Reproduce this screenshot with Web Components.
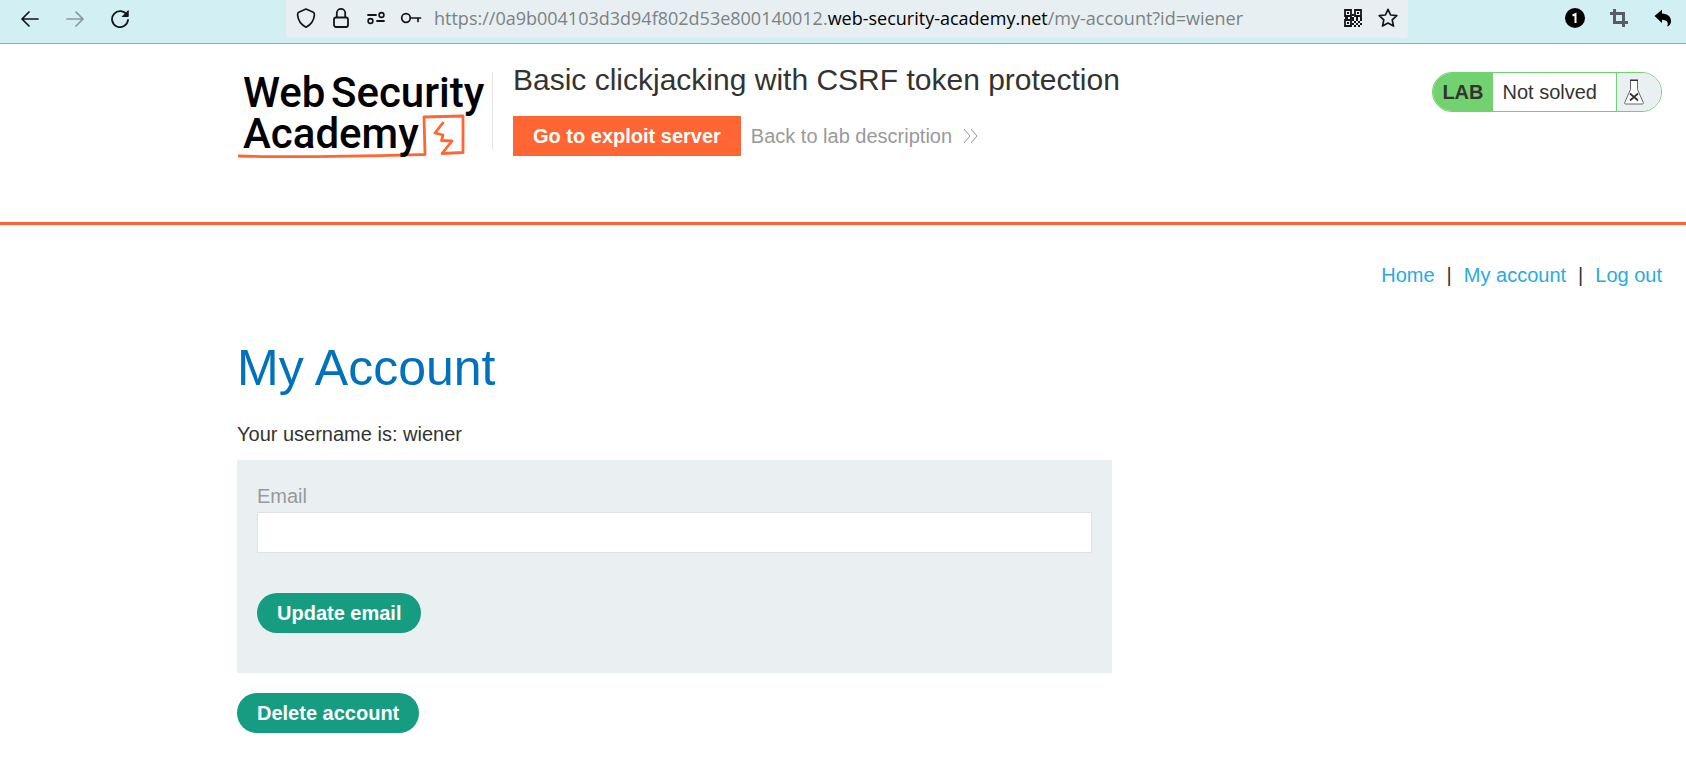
<!DOCTYPE html>
<html lang="en">
<head>
<meta charset="utf-8">
<title>Basic clickjacking with CSRF token protection</title>
<style>
body { margin: 0; background: #fff; color: #333332; font: 20px/24px "Liberation Sans", Arial, sans-serif; }
</style>
</head>
<body>
<browser-toolbar>
  <span slot="scheme">https://0a9b004103d3d94f802d53e800140012.</span><span slot="domain">web-security-academy.net</span><span slot="path">/my-account?id=wiener</span>
</browser-toolbar>
<lab-header>
  <academy-logo slot="logo"></academy-logo>
  <span slot="title">Basic clickjacking with CSRF token protection</span>
  <lab-status slot="status">Not solved</lab-status>
</lab-header>
<account-page></account-page>

<script>
const define = (name, markup) => {
  const template = document.createElement('template');
  template.innerHTML = markup;
  customElements.define(name, class extends HTMLElement {
    constructor() {
      super();
      this.attachShadow({ mode: 'open' }).append(template.content.cloneNode(true));
    }
  });
};

define('browser-toolbar', `
<style>
:host { display: flex; height: 43px; background: #d2eff3; border-bottom: 1px solid #94a9ad; font: 18px/24px "Open Sans", "Noto Sans", sans-serif; color: #7b8284; }
.nav { display: flex; width: 279px; padding-left: 7px; height: 37px; }
.bar { display: flex; flex: 1; min-width: 0; align-items: center; height: 38px; padding: 0 3px 2px 2px; background: #e8eff2; border-radius: 0 0 4px 4px; box-sizing: border-box; }
.url { flex: 1; min-width: 0; padding-left: 6px; white-space: nowrap; overflow: hidden; display: flex; }
.tools { display: flex; width: 278px; height: 36px; justify-content: flex-end; padding-right: 1px; box-sizing: border-box; }
button { display: flex; align-items: center; justify-content: center; padding: 0; border: 0; background: none; color: #15141a; height: 100%; width: 45px; }
.bar button { width: 35px; flex: none; }
.tools button { width: 44px; color: #000; }
button:disabled { color: #89999c; }
svg { display: block; fill: none; stroke: currentColor; stroke-width: 2; stroke-linecap: round; stroke-linejoin: round; }
.domain { color: #000; }
</style>
<div class="nav">
  <button aria-label="Back"><svg width="20" height="20"><path d="M18 10H2M9 3L2 10l7 7" stroke-width="1.7"/></svg></button>
  <button aria-label="Forward" disabled><svg width="20" height="20"><path d="M2 10h16M11 3l7 7-7 7" stroke-width="1.7"/></svg></button>
  <button aria-label="Reload"><svg width="20" height="20"><path d="M17 6.200A8 8 0 1 0 18 11" stroke-width="1.8"/><path d="M18.200 2v5.500h-5.500z" fill="currentColor" stroke-width="1"/></svg></button>
</div>
<div class="bar">
  <button aria-label="Tracking protection"><svg width="20" height="22"><path d="M10 2l7.300 3.200c1.200.5 1.200 1.500 1.100 3C17.800 14 14.500 18 10 20.200 5.500 18 2.200 14 1.600 8.200c-.1-1.500-.1-2.500 1.100-3z" stroke-width="1.700"/></svg></button>
  <button aria-label="Site information"><svg width="18" height="22"><rect x="2" y="10.500" width="14" height="9.500" rx="2" stroke-width="1.800"/><path d="M4.800 10V6a4.200 4.200 0 0 1 8.400 0v4" stroke-width="1.800"/></svg></button>
  <button aria-label="Permissions"><svg width="20" height="18"><path d="M2 6h8M11 12h7" stroke-width="1.800"/><circle cx="15.500" cy="6" r="2.400" stroke-width="1.600"/><circle cx="4.500" cy="12" r="2.400" stroke-width="1.600"/></svg></button>
  <button aria-label="Saved logins"><svg width="22" height="18"><circle cx="6" cy="9" r="4.300" stroke-width="1.700"/><path d="M10.500 9H20.500M18 9v3.500" stroke-width="1.700"/></svg></button>
  <div class="url" role="textbox" aria-label="Address"><slot name="scheme"></slot><span class="domain"><slot name="domain"></slot></span><slot name="path"></slot></div>
  <button aria-label="QR code"><svg width="18" height="18" style="stroke-width:2;stroke-linecap:butt;stroke-linejoin:miter"><path d="M1 1h6v6H1zM11 1h6v6h-6zM1 11h6v6H1z" stroke-width="1.800"/><path d="M3 4h2M13 4h2M3 14h2M8 6h2M1 9h3M6 9h4M12 9h2M16 9h2M8 11h2M12 11h2M16 11h2M10 13h2M14 13h2M8 15h2M12 15h2M16 15h2M10 17h2M14 17h2"/></svg></button>
  <button aria-label="Bookmark"><svg width="20" height="20"><path d="M10 1.300l2.600 5.700 6.200.7-4.600 4.200 1.300 6.200-5.500-3.100-5.500 3.100 1.300-6.200L1.200 7.700l6.200-.7z" stroke-width="1.700"/></svg></button>
</div>
<div class="tools">
  <button aria-label="Tab counter"><svg width="20" height="20"><circle cx="10" cy="10" r="10" fill="#000" stroke="none"/><path d="M7.500 7.500L10.500 6v9" stroke="#fff" stroke-linecap="butt" stroke-linejoin="miter"/></svg></button>
  <button aria-label="Capture"><svg width="18" height="18"><path d="M0 4.500h13.500V14M4.500 0v13.500H18M13.500 13v5" stroke="#5b5b66" stroke-width="3" stroke-linecap="butt" stroke-linejoin="miter"/></svg></button>
  <button aria-label="Undo"><svg width="18" height="18"><path d="M.5 7L8 .8v3.700c6 .2 9.500 3.800 9 8.500-.3 2.300-1.800 4-4 4.500 2-3.500.5-6.500-5-6.800v3.300z" fill="#000" stroke="none"/></svg></button>
</div>`);

define('academy-logo', `
<style>
:host { display: block; }
svg { display: block; overflow: visible; }
text { font: 500 42px "Roboto", sans-serif; fill: #000; }
</style>
<svg width="250" height="90" viewBox="0 0 250 90" role="img" aria-label="Web Security Academy">
  <text x="5" y="35">Web</text>
  <text x="93" y="35">Security</text>
  <path d="M0 84C60 86 130 84 187 82.500L186 45 225 44 225 80.500 204 81.500 214 69 203.500 68.500 205 63 197 61 205.500 50" fill="none" stroke="#ff6633" stroke-width="2.800" stroke-linejoin="round"/>
  <text x="5" y="76">Academy</text>
</svg>`);

define('lab-status', `
<style>
:host { display: flex; height: 38px; border: 1px solid #72d26f; border-radius: 20px; overflow: hidden; line-height: 38px; color: #333332; background: #fff; }
b { background: #72d26f; padding: 0 9px; }
.state { padding: 0 19px 0 10px; border-right: 1px solid #72d26f; }
.flask { display: flex; align-items: center; width: 44px; box-sizing: border-box; padding-left: 7px; background: #eaeff2; }
</style>
<b>LAB</b><span class="state"><slot></slot></span>
<span class="flask"><svg width="20" height="26" viewBox="0 0 20 26" fill="none" stroke="#333332"><path d="M6.500 1.500v9L.7 23.500q-.3 1.500.8 1.500h17q1.100 0 .8-1.500l-5.800-13v-9z" fill="#fff" stroke="#666"/><path d="M6 1.200h8" stroke-width="1.500"/><path d="M6 14.500l8 7M14 14.500l-8 7" stroke-width="1.700"/></svg></span>`);

define('lab-header', `
<style>
:host { display: flex; align-items: flex-start; min-height: 181px; padding: 28px 24px 0 max(24px, calc(50% - 606px)); border-bottom: 3px solid #ff6633; box-sizing: border-box; }
.logo { padding: 0 4px 0 1px; flex: none; }
.main { border-left: 1px solid #e4e4e4; padding-left: 20px; height: 78px; flex: 1; }
h2 { margin: -10px 0 18px; font-size: 30px; line-height: 36px; font-weight: 400; }
.row { display: flex; align-items: center; gap: 10px; }
.exploit { background: #ff6633; color: #fff; font-weight: 700; line-height: 40px; padding: 0 20px; text-decoration: none; }
.back { display: flex; align-items: center; gap: 11px; color: #999; text-decoration: none; }
</style>
<div class="logo"><slot name="logo"></slot></div>
<div class="main">
  <h2><slot name="title"></slot></h2>
  <div class="row"><a class="exploit" href="#exploit">Go to exploit server</a>
  <a class="back" href="#lab">Back to lab description <svg width="16" height="18" fill="none" stroke="#999"><path d="M1 2l6 7-6 7M8 2l6 7-6 7"/></svg></a></div>
</div>
<div><slot name="status"></slot></div>`);

define('site-nav', `
<style>
:host { display: block; }
nav { display: flex; justify-content: flex-end; gap: 12px; color: #333332; }
a { color: #29abe2; text-decoration: none; }
</style>
<nav><a href="#home">Home</a><span>|</span><a href="#account">My account</a><span>|</span><a href="#logout">Log out</a></nav>`);

define('pill-button', `
<style>
:host { display: block; }
button { display: block; margin: 0; height: 40px; padding: 0 20px; border: 0; border-radius: 20px; background: #169c80; color: #fff; font: bold 20px/40px "Liberation Sans", Arial, sans-serif; }
</style>
<button type="button"><slot></slot></button>`);

define('account-form', `
<style>
:host { display: block; }
form { box-sizing: border-box; max-width: 875px; padding: 24px 20px 40px; background: #eaeff2; }
label { display: block; color: #999; margin-bottom: 4px; }
input { display: block; box-sizing: border-box; width: 100%; height: 41px; border: 1px solid #e2e2e2; border-radius: 0; background: #fff; padding: 0 10px; margin: 0 0 40px; font: inherit; color: #333332; outline: 0; }
</style>
<form><label for="email">Email</label><input id="email" type="email" name="email"><pill-button>Update email</pill-button></form>`);

define('account-page', `
<style>
:host { display: block; }
site-nav { padding: 38px 24px 0; }
main { padding: 0 24px 24px max(24px, calc(50% - 606px)); }
h1 { margin: 51px 0 24px; font-size: 50px; line-height: 60px; font-weight: 400; color: #0071bc; }
p { margin: 0 0 14px; }
account-form { margin-bottom: 20px; }
</style>
<site-nav></site-nav>
<main><h1>My Account</h1><p>Your username is: wiener</p><account-form></account-form><pill-button>Delete account</pill-button></main>`);
</script>
</body>
</html>
